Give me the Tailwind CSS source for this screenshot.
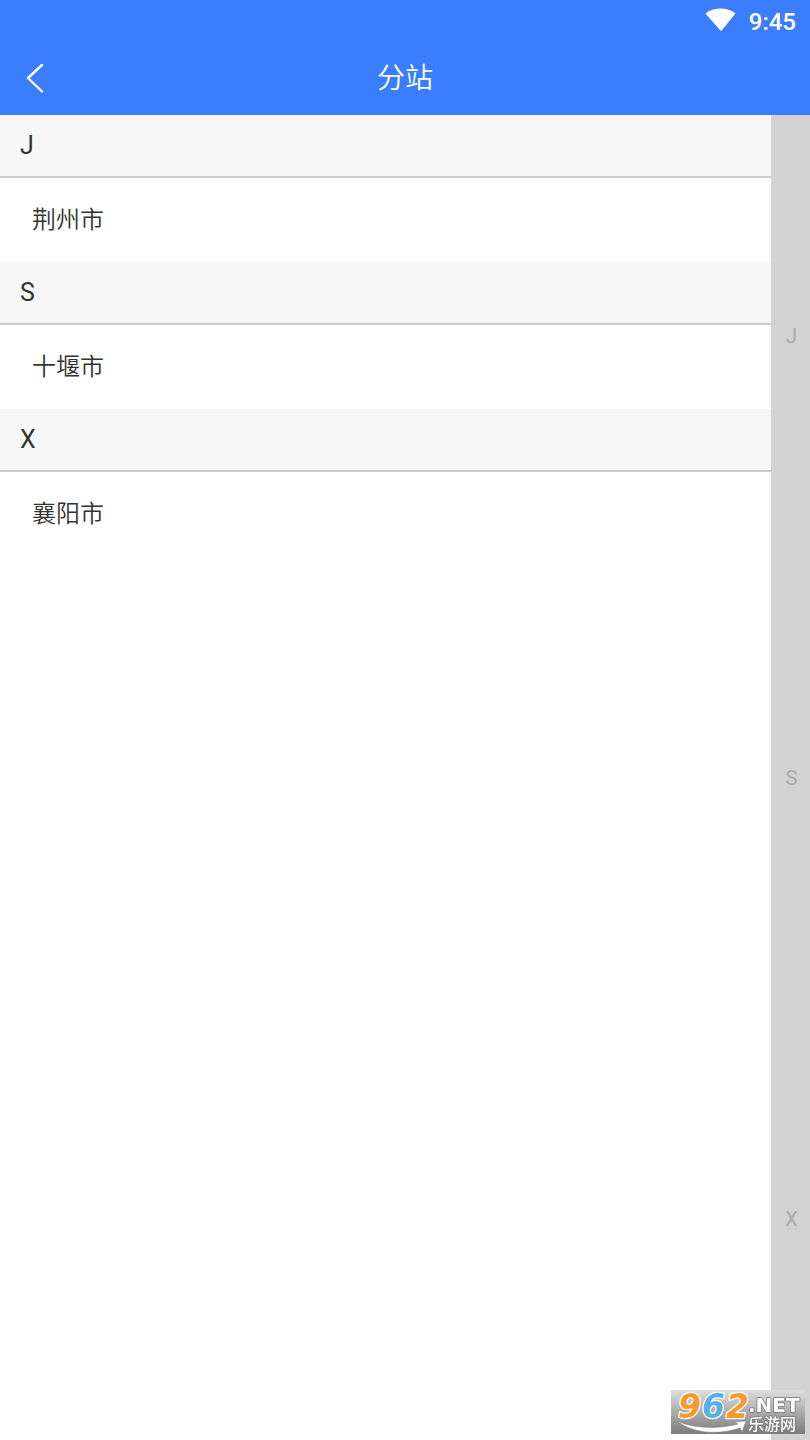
<!DOCTYPE html>
<html lang="zh-CN">
<head>
    <meta charset="UTF-8">
    <meta name="viewport" content="width=device-width, initial-scale=1.0">
    <title>分站</title>
    <script src="https://cdn.jsdelivr.net/npm/@tailwindcss/browser@4"></script>
</head>
<body class="flex min-h-screen flex-col bg-white font-[Roboto,'Noto_Sans_CJK_SC',sans-serif] text-[#333]">
    <!-- Header -->
    <header class="bg-[#3b7dff] text-white">
        <div class="flex h-10 items-center justify-end gap-3 pr-3.5">
            <svg class="h-6 w-8" viewBox="0 0 32 24" fill="currentColor" aria-hidden="true">
                <path d="M.5 5.600C4.500 2.200 10 .6 15.500 .6S26.500 2.200 30.500 5.600L16 23.200Z" />
            </svg>
            <time class="pt-1 text-2xl font-medium">9:45</time>
        </div>
        <div class="grid h-[75px] grid-cols-[80px_1fr_80px] items-center">
            <button type="button" aria-label="返回" class="pl-6">
                <svg class="h-8 w-6" viewBox="0 0 24 32" fill="none" stroke="currentColor" stroke-width="2.4" stroke-linecap="round" stroke-linejoin="round">
                    <path d="M18 3L4 16L18 29.500" />
                </svg>
            </button>
            <h1 class="pt-0.5 text-center text-[28px] font-[350]">分站</h1>
        </div>
    </header>

    <div class="flex flex-1">
        <!-- City list -->
        <main class="flex-1">
            <section id="J">
                <h2 class="h-[63px] border-b-2 border-[#cdcdcd] bg-[#f7f7f7] px-5 text-[25px] leading-[62px]">J</h2>
                <a href="#" class="block h-21 px-8 text-2xl leading-[84px] font-[350]">荆州市</a>
            </section>
            <section id="S">
                <h2 class="h-[63px] border-b-2 border-[#cdcdcd] bg-[#f7f7f7] px-5 text-[25px] leading-[62px]">S</h2>
                <a href="#" class="block h-21 px-8 text-2xl leading-[84px] font-[350]">十堰市</a>
            </section>
            <section id="X">
                <h2 class="h-[63px] border-b-2 border-[#cdcdcd] bg-[#f7f7f7] px-5 text-[25px] leading-[62px]">X</h2>
                <a href="#" class="block h-21 px-8 text-2xl leading-[84px] font-[350]">襄阳市</a>
            </section>
        </main>

        <!-- Letter index -->
        <nav class="flex w-[39px] flex-col bg-[#d3d3d3] pl-0.5 text-xl text-[#aaa]">
            <a href="#J" class="flex flex-1 items-center justify-center">J</a>
            <a href="#S" class="flex flex-1 items-center justify-center">S</a>
            <a href="#X" class="flex flex-1 items-center justify-center">X</a>
        </nav>
    </div>

    <!-- Site badge -->
    <svg class="fixed right-[5px] bottom-1.5 h-11 w-[134px] overflow-visible" viewBox="0 0 134 44" role="img" aria-label="962.NET 乐游网">
        <defs>
            <linearGradient id="badge" x1="0" y1="0" x2="0" y2="1">
                <stop offset="0" stop-color="#dedede" />
                <stop offset="1" stop-color="#7c7c7c" />
            </linearGradient>
        </defs>
        <rect width="134" height="44" fill="url(#badge)" />
        <path d="M6 31C24 39 48 39 67 34L63 32L75 31L71 42L69 38C48 45 22 44 6 31Z" fill="#fff" stroke="#777" stroke-width=".5" />
        <g font-family="DejaVu Sans, sans-serif" font-weight="700" font-style="italic" font-size="33" stroke="#fff" stroke-width="2.500" stroke-linejoin="round" paint-order="stroke">
            <text x="7" y="28" fill="#f7992f">9</text>
            <text x="31" y="28" fill="#5aaee6">6</text>
            <text x="55" y="28" fill="#f7992f">2</text>
        </g>
        <g fill="#fff" stroke="#777" stroke-width="1.500" stroke-linejoin="round" paint-order="stroke">
            <text x="77" y="22" font-family="DejaVu Sans, sans-serif" font-weight="700" font-size="20">.NET</text>
            <text x="77" y="40" font-family="Noto Sans CJK SC, sans-serif" font-weight="500" font-size="16">乐游网</text>
        </g>
    </svg>
</body>
</html>
